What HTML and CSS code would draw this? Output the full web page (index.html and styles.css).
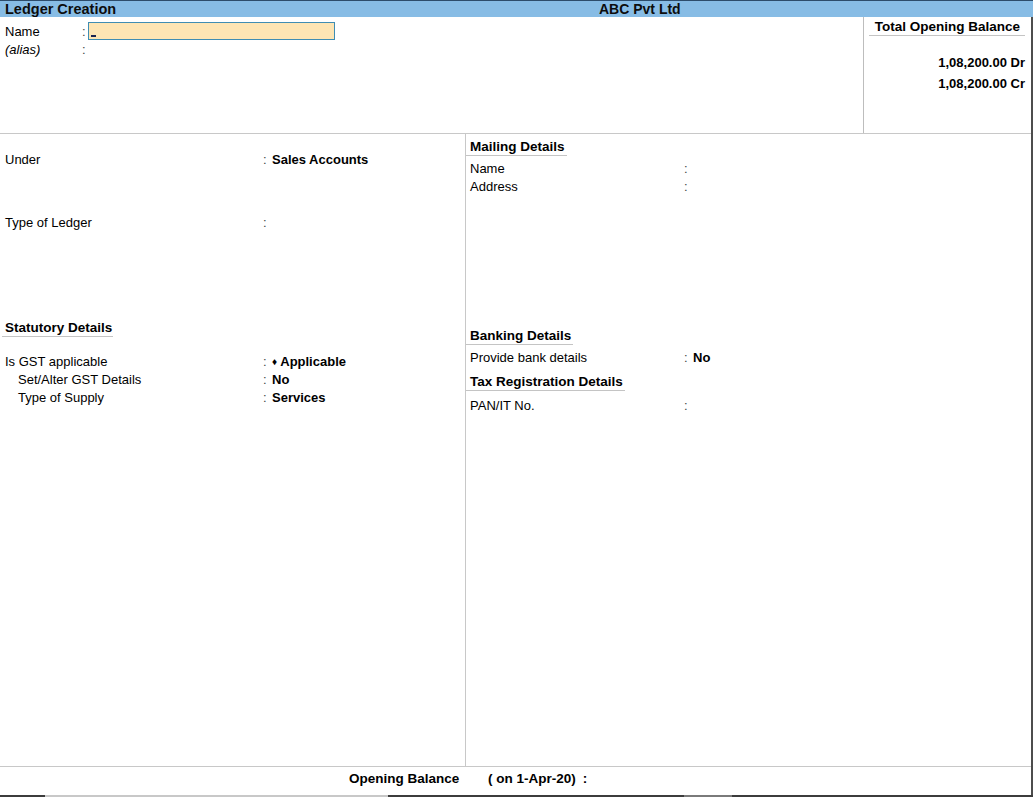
FILE: index.html
```html
<!DOCTYPE html>
<html lang="en">
<head>
<meta charset="utf-8">
<title>Ledger Creation</title>
<link rel="stylesheet" href="styles.css">
</head>
<body>
<div class="app">
  <header class="titlebar">
    <span class="title">Ledger Creation</span>
    <span class="company">ABC Pvt Ltd</span>
  </header>
  <div class="frame">
    <section class="top">
      <div class="name-form">
        <div class="row">
          <span class="lbl">Name</span><span class="colon">:</span>
          <span class="input"><span class="cursor"></span></span>
        </div>
        <div class="row">
          <span class="lbl alias">(alias)</span><span class="colon">:</span>
        </div>
      </div>
      <aside class="balance">
        <div class="bal-head">Total Opening Balance</div>
        <div class="bal-val first">1,08,200.00 Dr</div>
        <div class="bal-val">1,08,200.00 Cr</div>
      </aside>
    </section>

    <section class="main">
      <div class="col left">
        <div class="frow under"><span class="flbl">Under</span><span class="fcolon">:</span><span class="fval">Sales Accounts</span></div>
        <div class="frow type-ledger"><span class="flbl">Type of Ledger</span><span class="fcolon">:</span></div>
        <div class="heading statutory">Statutory Details</div>
        <div class="frow gst"><span class="flbl">Is GST applicable</span><span class="fcolon">:</span><span class="fval"><span class="diamond">♦</span> Applicable</span></div>
        <div class="frow"><span class="flbl sub">Set/Alter GST Details</span><span class="fcolon">:</span><span class="fval">No</span></div>
        <div class="frow"><span class="flbl sub">Type of Supply</span><span class="fcolon">:</span><span class="fval">Services</span></div>
      </div>
      <div class="col right">
        <div class="heading rhead mailing">Mailing Details</div>
        <div class="rrow mail-first"><span class="rlbl">Name</span><span class="fcolon">:</span></div>
        <div class="rrow"><span class="rlbl">Address</span><span class="fcolon">:</span></div>
        <div class="heading rhead banking">Banking Details</div>
        <div class="rrow bank-row"><span class="rlbl">Provide bank details</span><span class="fcolon">:</span><span class="fval">No</span></div>
        <div class="heading rhead tax">Tax Registration Details</div>
        <div class="rrow pan-row"><span class="rlbl">PAN/IT No.</span><span class="fcolon">:</span></div>
      </div>
    </section>

    <footer class="footer">
      <span class="ob">Opening Balance</span>
      <span class="ob-date">( on 1-Apr-20)</span>
      <span class="ob-colon">:</span>
    </footer>
  </div>
  <div class="strip">
    <span class="seg dark s1"></span>
    <span class="seg light s2"></span>
    <span class="seg dark s3"></span>
    <span class="seg mid s4"></span>
    <span class="seg dark s5"></span>
  </div>
</div>
</body>
</html>
```

FILE: styles.css
```css
* { box-sizing: border-box; }

html, body {
  margin: 0;
  padding: 0;
  background: #ffffff;
}

body {
  font-family: "Liberation Sans", Arial, sans-serif;
  font-size: 13px;
  color: #000;
}

.app {
  width: 1033px;
  height: 797px;
  display: flex;
  flex-direction: column;
  overflow: hidden;
}

/* Title bar */
.titlebar {
  height: 17px;
  flex: 0 0 17px;
  background: #87bce5;
  border-top: 1px solid #2d4c6b;
  display: flex;
  align-items: center;
  font-weight: bold;
  color: #0d0d0d;
}

.title {
  flex: 0 0 599px;
  padding-left: 5px;
  font-size: 14.5px;
  line-height: 16px;
}

.company {
  font-size: 14px;
  line-height: 16px;
}

/* Frame */
.frame {
  flex: 1;
  display: flex;
  flex-direction: column;
  border-right: 2px solid #4d4d4d;
}

/* Top section */
.top {
  height: 117px;
  flex: 0 0 117px;
  display: flex;
  border-bottom: 1px solid #c8c8c8;
}

.name-form {
  flex: 1;
  padding-top: 5px;
}

.row {
  display: flex;
  align-items: flex-start;
  height: 18px;
}

.lbl {
  width: 82px;
  padding-left: 5px;
  line-height: 20px;
}

.alias { font-style: italic; }

.colon {
  width: 6px;
  line-height: 20px;
  color: #444;
}

.input {
  width: 247px;
  height: 18px;
  background: #fde5b4;
  border: 1px solid #3f8db3;
  position: relative;
}

.cursor {
  position: absolute;
  left: 2px;
  bottom: 2px;
  width: 5px;
  height: 2px;
  background: #1a2450;
}

.balance {
  width: 168px;
  flex: 0 0 168px;
  border-left: 1px solid #bdbdbd;
  padding: 1px 6px 0 5px;
}

.bal-head {
  font-weight: bold;
  font-size: 13.5px;
  line-height: 17px;
  text-align: center;
  padding-left: 1px;
  border-bottom: 1px solid #c4c4c4;
}

.bal-val {
  font-weight: bold;
  text-align: right;
  line-height: 21px;
}

.bal-val.first { margin-top: 16px; }

/* Main */
.main {
  height: 633px;
  flex: 0 0 633px;
  display: flex;
  border-bottom: 1px solid #c8c8c8;
}

.col.left {
  width: 466px;
  flex: 0 0 466px;
  border-right: 1px solid #c8c8c8;
  padding-top: 17px;
}

.col.right {
  flex: 1;
  padding-top: 5px;
}

.frow, .rrow {
  display: flex;
  height: 18px;
  line-height: 18px;
}

.flbl {
  width: 263px;
  padding-left: 5px;
}

.flbl.sub { padding-left: 18px; }

.fcolon {
  width: 9px;
  color: #444;
}

.fval {
  font-weight: bold;
}

.diamond {
  font-size: 10px;
  position: relative;
  top: -1px;
}

.type-ledger { margin-top: 45px; }

.heading {
  font-weight: bold;
  font-size: 13.5px;
  line-height: 16px;
  border-bottom: 1px solid #c4c4c4;
  width: fit-content;
}

.statutory {
  margin-top: 88px;
  margin-left: 2px;
  padding: 0 1px 0 3px;
}

.gst { margin-top: 16px; }

.rhead {
  padding: 0 2px 0 4px;
}

.rlbl {
  width: 218px;
  padding-left: 4px;
}

.mail-first { margin-top: 4px; }

.banking { margin-top: 132px; }

.bank-row { margin-top: 4px; }

.tax { margin-top: 7px; }

.pan-row { margin-top: 6px; }

/* Footer */
.footer {
  flex: 1;
  display: flex;
  align-items: center;
  font-weight: bold;
  font-size: 13.5px;
  padding-left: 349px;
  padding-bottom: 6px;
}

.ob { width: 139px; }

.ob-colon { margin-left: 7px; }

/* Bottom strip */
.strip {
  height: 2px;
  flex: 0 0 2px;
  display: flex;
}

.seg { height: 2px; display: block; }
.seg.dark { background: #3c3c3c; }
.seg.light { background: #c8c8c8; }
.seg.mid { background: #7a7a7a; }
.s1 { width: 45px; }
.s2 { width: 343px; }
.s3 { width: 296px; }
.s4 { width: 48px; }
.s5 { flex: 1; }
```
